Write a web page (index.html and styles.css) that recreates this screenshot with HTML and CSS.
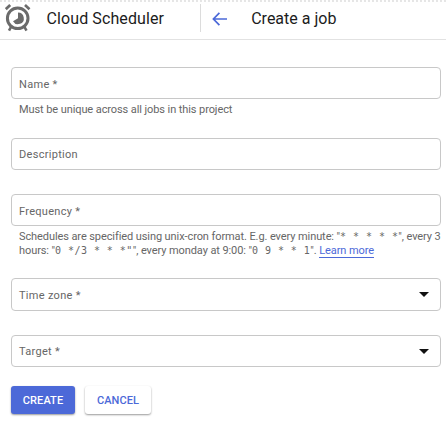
FILE: index.html
```html
<!DOCTYPE html>
<html lang="en">
<head>
<meta charset="utf-8">
<title>Create a job</title>
<link rel="stylesheet" href="styles.css">
</head>
<body>
<header class="topbar">
  <svg class="logo" width="26" height="28" viewBox="0 0 26 28" fill="none" stroke="#6b6b6b">
    <circle cx="12.7" cy="14.3" r="10.3" stroke-width="3"/>
    <path d="M13 8.6a5.8 5.8 0 1 1-5 8.7l5-3z" fill="#6b6b6b" stroke="none"/>
    <path d="M.8 5.2 5.2 1M20 1l4.5 4.2" stroke-width="2.7"/>
    <path d="m6 23-2 3.7M19.5 23l2 3.7" stroke-width="2.6"/>
  </svg>
  <span class="product">Cloud Scheduler</span>
  <span class="divider"></span>
  <svg class="back" width="16" height="14" viewBox="0 0 16 14" fill="none" stroke="#4c69d8" stroke-width="1.7"><path d="M15 7H1.5M7.4.8 1.4 7l6 6.2"/></svg>
  <h1 class="title">Create a job</h1>
</header>
<main class="form">
  <div class="group name">
    <div class="field low">Name *</div>
    <p class="hint">Must be unique across all jobs in this project</p>
  </div>
  <div class="group description"><div class="field">Description</div></div>
  <div class="group frequency">
    <div class="field low">Frequency *</div>
    <p class="hint cron">Schedules are specified using unix-cron format. E.g. every minute: "<code>* * * * *</code>", every 3<br>hours: "<code>0 */3 * * *"</code>", every monday at 9:00: "<code>0 9 * * 1</code>". <a class="link">Learn more</a></p>
  </div>
  <div class="group timezone"><div class="field tall">Time zone *<span class="caret"></span></div></div>
  <div class="group target"><div class="field">Target *<span class="caret"></span></div></div>
  <div class="actions">
    <button class="button primary">CREATE</button>
    <button class="button secondary">CANCEL</button>
  </div>
</main>
</body>
</html>
```

FILE: styles.css
```css
* { box-sizing: border-box; }
body {
  margin: 0;
  width: 446px;
  height: 430px;
  overflow: hidden;
  background: #fff;
  color: #666;
  font: 11px/14px Roboto, sans-serif;
}
.topbar {
  display: flex;
  align-items: center;
  height: 40px;
  padding: 0 0 2px 5px;
  border-bottom: 1px solid #e2e2e2;
  background: radial-gradient(circle at 1px 1px, #ddd .6px, transparent 1px) 0 0 / 4px 3px repeat-x;
  color: #1c1c1c;
  font-size: 16px;
  line-height: 20px;
}
.logo { flex: none; margin-top: -2px; }
.product { width: 169px; padding-left: 15.5px; letter-spacing: .1px; }
.divider { width: 1px; height: 28px; margin-top: -2px; background: #dcdcdc; }
.back { margin-left: 10.6px; }
.title { margin: 0 0 0 23.6px; font: inherit; }
.form { padding: 27px 5px 0 11px; }
.group { display: flex; flex-direction: column; }
.name { height: 71px; }
.description { height: 56px; }
.frequency { height: 84px; }
.timezone { height: 57px; }
.target { height: 51px; }
.field {
  display: flex;
  align-items: center;
  justify-content: space-between;
  height: 32px;
  padding: 2px 11px 0 7px;
  border: 1px solid #c8c8c8;
  border-radius: 4px;
  letter-spacing: .3px;
}
.low { padding-top: 4px; }
.tall { height: 33px; }
.hint { margin: 4px 0 0 8px; white-space: nowrap; letter-spacing: -.09px; }
.cron { margin-top: 4px; }
code { font: 10px/14px "DejaVu Sans Mono", monospace; letter-spacing: .46px; }
.link { color: #4c69d8; border-bottom: 1px solid #4c69d8; }
.caret {
  border: 5px solid transparent;
  border-top-color: #111;
  border-bottom: 0;
  margin-bottom: 2px;
}
.actions { display: flex; gap: 10px; }
.button {
  height: 28px;
  padding: 1px 0 0;
  border: 0;
  border-radius: 3px;
  font: 500 11px/27px Roboto, sans-serif;
  letter-spacing: .1px;
  box-shadow: 0 1px 2px rgba(0, 0, 0, .4);
}
.primary { width: 64px; background: #4c69d8; color: #fff; }
.secondary { width: 66px; background: #fff; color: #4c69d8; }
```
